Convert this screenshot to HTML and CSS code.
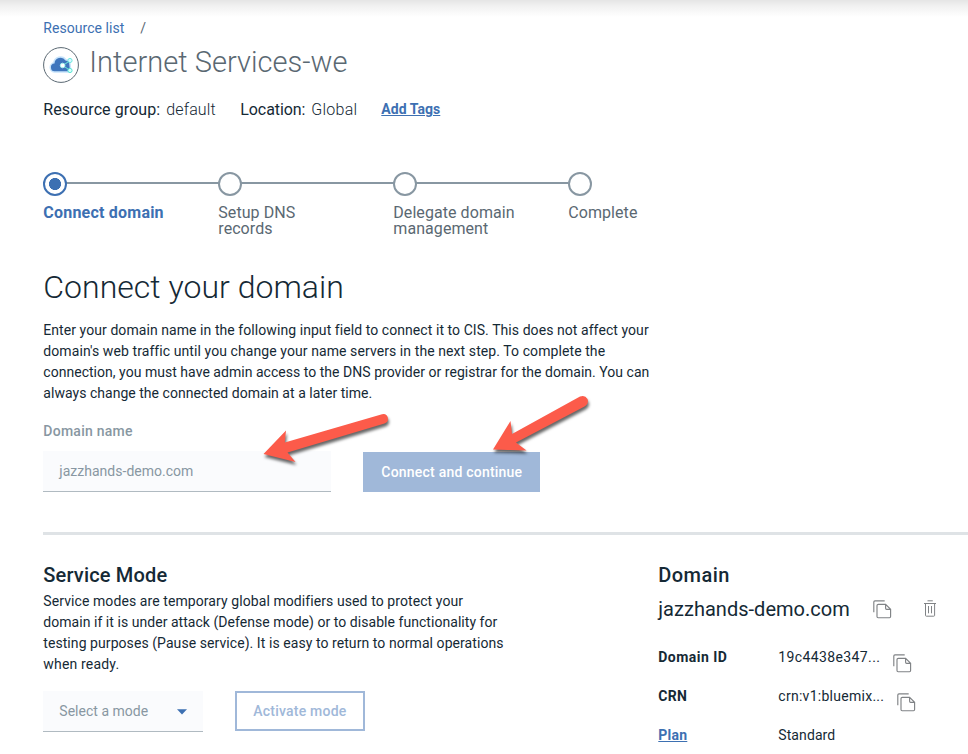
FILE: index.html
```
<!DOCTYPE html>
<html lang="en">
<head>
<meta charset="utf-8">
<title>Internet Services-we</title>
<link rel="stylesheet" href="styles.css">
</head>
<body>
<svg class="defs" width="0" height="0">
  <defs>
    <symbol id="copy" viewBox="0 0 19 19">
      <path d="M.8 12.2V2Q.8.8 2 .8H11.7M5.3 4.3H12.6L17.6 9.3V16.6Q17.6 17.7 16.5 17.7H5.1Q4 17.7 4 16.6V5.4Q4 4.3 5.3 4.3ZM12.6 4.3V8.3Q12.6 9.3 13.6 9.3H17.6" fill="none" stroke="#808386" stroke-width="1.15"/>
    </symbol>
  </defs>
</svg>
<div class="page">
  <nav class="crumbs"><a>Resource list</a><span class="slash">/</span></nav>
  <header class="head">
    <svg class="logo" viewBox="0 0 36 36">
      <circle cx="18" cy="18" r="17.4" fill="#fff" stroke="#5a6872" stroke-width="1"/>
      <path d="M12 24.200A3.800 3.800 0 0 1 11.500 16.600A6 6 0 0 1 22.500 13.500L26 14.500L27 24.200Z" fill="#3f76bd" stroke="#c8e4fb" stroke-width="3" stroke-linejoin="round" paint-order="stroke"/>
      <path d="M27 13.500L20 18.500L27 23.500" fill="none" stroke="#6eedd8" stroke-width="1"/>
      <circle cx="27" cy="13.500" r="2.100" fill="#d6f8ff" stroke="#6eeae0"/>
      <circle cx="19.600" cy="18.500" r="2.300" fill="#fff" stroke="#a8f3f0"/>
      <circle cx="27" cy="23.500" r="2.100" fill="#d6fff8" stroke="#5be5d6"/>
    </svg>
    <h1>Internet Services-we</h1>
  </header>
  <div class="meta">
    <b class="group">Resource group:</b><span class="groupval">default</span>
    <b class="loc">Location:</b><span class="locval">Global</span>
    <a class="tags">Add Tags</a>
  </div>
  <ol class="steps">
    <li class="step current"><i class="dot"></i><span>Connect domain</span></li>
    <li class="step"><i class="dot"></i><span>Setup DNS<br>records</span></li>
    <li class="step"><i class="dot"></i><span>Delegate domain<br>management</span></li>
    <li class="step"><i class="dot"></i><span>Complete</span></li>
  </ol>
  <h2 class="title">Connect your domain</h2>
  <p class="intro"><span class="t1">Enter your domain name in the following input field to connect it to CIS. This does not affect your</span><br><span class="t2">domain's web traffic until you change your name servers in the next step. To complete the</span><br><span>connection, you must have admin access to the DNS provider or registrar for the domain. You can</span><br><span>always change the connected domain at a later time.</span></p>
  <label class="label">Domain name</label>
  <div class="form">
    <div class="input">jazzhands-demo.com</div>
    <div class="button">Connect and continue</div>
  </div>
  <div class="rule"></div>
  <div class="columns">
    <section class="service">
      <h3>Service Mode</h3>
      <p><span class="t2">Service modes are temporary global modifiers used to protect your</span><br><span>domain if it is under attack (Defense mode) or to disable functionality for</span><br><span class="t1">testing purposes (Pause service). It is easy to return to normal operations</span><br><span class="t3">when ready.</span></p>
      <div class="form">
        <div class="select"><span>Select a mode</span><svg class="caret" viewBox="0 0 10 6"><path d="M0 .3H10L5 5.6Z" fill="#3d70b2"/></svg></div>
        <div class="button outline">Activate mode</div>
      </div>
    </section>
    <section class="domain">
      <h3>Domain</h3>
      <div class="name"><span>jazzhands-demo.com</span><svg class="copy"><use href="#copy"/></svg>
        <svg class="trash" viewBox="0 0 12 17"><path d="M3.5 .8H8.8M0 3.5H12M1.5 3.5V15.4Q1.5 16.2 2.3 16.2H9.8Q10.6 16.2 10.6 15.4V3.5M4.5 6V13.3M7.5 6V13.3" fill="none" stroke="#808386" stroke-width="1"/></svg></div>
      <div class="row"><b class="id">Domain ID</b><span class="idval">19c4438e347...</span><svg class="copy"><use href="#copy"/></svg></div>
      <div class="row"><b>CRN</b><span class="crnval">crn:v1:bluemix...</span><svg class="copy"><use href="#copy"/></svg></div>
      <div class="row"><a>Plan</a><span class="planval">Standard</span></div>
    </section>
  </div>
  <svg class="arrows" viewBox="0 0 968 754">
    <g fill="#fc5b4a">
      <path d="M263.500 454L286 430.500L284.800 442.500L382 414.200Q386.500 413 387.800 417.500Q388.800 422 384.500 423.600L287.500 452.500L295.500 462Z"/>
      <path d="M493 449.500L510.500 421L512 434L580 396.500Q585 394.500 587.500 399Q589.200 403.500 585 406.200L516 442.500L526.500 450.500Z"/>
    </g>
  </svg>
</div>
</body>
</html>
```

FILE: styles.css
```
* { box-sizing: border-box; margin: 0; padding: 0; }
html, body { overflow: hidden; }
body { width: 968px; height: 754px; background: #fff; color: #152935; font: 14px/21px Roboto, "Liberation Sans", sans-serif; }
.defs { position: absolute; }
.page { position: relative; height: 754px; padding: 17px 0 0 43.3px; background: linear-gradient(#e5e5e5, #f1f1f1 6px, #fff 17px) no-repeat; }
span, a, b, h1, h2, h3 { white-space: nowrap; }
b { font-weight: 500; }
a { color: #3d70b2; }
.crumbs { display: flex; height: 30px; padding-top: 1px; letter-spacing: .043px; }
.slash { margin-left: 16px; color: #5a6872; }
.head { display: flex; height: 36px; }
.logo { width: 36px; height: 36px; margin-right: 10px; flex: none; }
h1 { font-size: 29px; line-height: 30px; font-weight: 300; color: #5a6872; letter-spacing: .03px; }
.meta { display: flex; height: 24px; margin-top: 14px; font-size: 16px; line-height: 25px; }
.meta b { font-weight: 400; }
.meta span { font-weight: 300; }
.meta .group { width: 123px; letter-spacing: .086px; }
.meta .groupval { width: 74px; letter-spacing: .132px; }
.meta .loc { width: 71px; letter-spacing: -.087px; }
.meta .locval { width: 70px; letter-spacing: .24px; }
.tags { font-size: 14px; font-weight: 700; text-decoration: underline; letter-spacing: .047px; }
.steps { display: flex; list-style: none; margin-top: 51px; height: 88px; font-size: 16px; line-height: 16px; color: #5a6872; letter-spacing: .065px; }
.step { width: 175px; background: linear-gradient(#8897a2, #8897a2) 0 10px / 100% 2px no-repeat; }
.step:last-child { background-image: none; }
.dot { display: block; width: 24px; height: 24px; margin-bottom: 9px; border: 2px solid #8897a2; border-radius: 50%; background: #fff; }
.current { color: #3d70b2; font-weight: 700; letter-spacing: .217px; }
.current .dot { border-color: #3d70b2; background: radial-gradient(circle, #3d70b2 5.7px, #fff 6.3px); }
.title { margin-top: 7px; height: 40px; font-size: 32px; line-height: 41px; font-weight: 300; letter-spacing: .02px; }
.intro { margin-top: 13px; height: 84px; letter-spacing: .031px; }
.t1 { letter-spacing: .067px; }
.t2 { letter-spacing: .084px; }
.t3 { letter-spacing: .182px; }
.label { display: block; margin-top: 17px; height: 21px; color: #8897a2; font-weight: 500; letter-spacing: .254px; }
.form { display: flex; gap: 32px; height: 41px; }
.label + .form { margin-top: 9px; }
.input, .select { width: 288px; height: 41px; padding: 0 16px; line-height: 40px; background: #fafbfd; color: #8897a2; border-bottom: 1px solid #b0bac1; letter-spacing: .02px; }
.button { width: 177px; height: 40px; margin-top: 1px; padding-left: 18px; line-height: 40px; color: #fff; background: #a0b8d9; font-weight: 500; letter-spacing: .216px; }
.rule { margin-top: 40px; height: 3px; background: #dfe3e6; }
.columns { display: flex; height: 219px; padding-top: 27px; }
.service { width: 615px; }
h3 { height: 26px; font-size: 20px; line-height: 26px; font-weight: 500; letter-spacing: .164px; }
.domain h3 { letter-spacing: .443px; }
.service p { margin-top: 3px; height: 84px; letter-spacing: .044px; }
.service .form { margin-top: 16px; }
.select { width: 160px; display: flex; align-items: center; justify-content: space-between; }
.caret { width: 10px; height: 6px; margin-top: 2px; }
.outline { width: 130px; margin: 0; padding-left: 16px; line-height: 36px; border: 2px solid #a0b8d9; background: #fff; color: #a0b8d9; }
.name { display: flex; height: 36px; margin-top: 3px; font-size: 20px; line-height: 36px; letter-spacing: .023px; }
.name span { width: 215px; }
.copy { width: 19px; height: 19px; margin-top: 9px; flex: none; }
.trash { width: 12px; height: 17px; margin: 9px 0 0 32px; }
.row { display: flex; height: 39px; line-height: 21px; }
.name + .row { margin-top: 20px; }
.row b, .row a { width: 120px; flex: none; font-weight: 700; letter-spacing: .3px; }
.row .id { letter-spacing: .46px; }
.row a { width: auto; margin-right: 91px; text-decoration: underline; letter-spacing: .23px; }
.idval { letter-spacing: .383px; }
.crnval { letter-spacing: .274px; }
.planval { letter-spacing: .092px; }
.row .copy { margin: 7px 0 0 12.5px; }
.arrows { position: absolute; inset: 0; width: 968px; height: 754px; filter: drop-shadow(1px 3px 1.5px rgba(0, 0, 0, .6)); }
```
